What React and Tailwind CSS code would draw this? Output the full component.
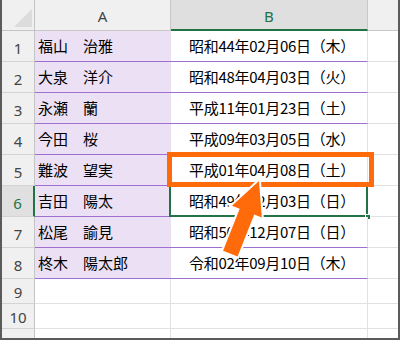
import React from "react";

const rows = [
  ["福山　治雅", "昭和44年02月06日（木）"],
  ["大泉　洋介", "昭和48年04月03日（火）"],
  ["永瀬　蘭", "平成11年01月23日（土）"],
  ["今田　桜", "平成09年03月05日（水）"],
  ["難波　望実", "平成01年04月08日（土）"],
  ["吉田　陽太", "昭和49年12月03日（日）"],
  ["松尾　諭見", "昭和50年12月07日（日）"],
  ["柊木　陽太郎", "令和02年09月10日（木）"],
];

const jp = { fontFamily: '"Noto Sans CJK JP", "Noto Sans", sans-serif' };
const ui = { fontFamily: '"Noto Sans", "Open Sans", sans-serif' };

export default function App() {
  return (
    <div className="relative w-[400px] h-[340px] overflow-hidden bg-white border-l-2 border-r-2 border-b-2 border-[#5b5b5b]">
      {/* header row */}
      <div className="flex h-[31px]" style={ui}>
        <div className="relative w-[33px] bg-[#f0f0f0] border-r border-b border-[#c4c4c4]">
          <svg className="absolute left-0 top-0" width="32" height="30">
            <polygon points="12,27 30,27 30,9" fill="#dcdcdc" />
          </svg>
        </div>
        <div className="w-[136px] bg-[#f0f0f0] border-r border-b border-[#c8c8c8] flex items-center justify-center pt-[3px] text-[15px] text-[#444]">
          A
        </div>
        <div className="w-[197px] bg-[#dfdfdf] border-r border-[#c8c8c8] border-b-2 border-b-[#217346] flex items-center justify-center pt-[3px] text-[15px] text-[#217346]">
          B
        </div>
        <div className="w-[30px] bg-[#f0f0f0] border-b border-[#c8c8c8]" />
      </div>

      {rows.map(([name, date], i) => {
        const active = i === 5;
        return (
          <div key={i} className="flex h-[31px]">
            <div
              className={
                active
                  ? "w-[33px] bg-[#e0e0e0] border-r-2 border-r-[#217346] border-b border-b-[#d4d4d4] flex items-center justify-center pt-[4px] text-[15px] text-[#217346]"
                  : "w-[33px] bg-[#f0f0f0] border-r border-r-[#c4c4c4] border-b border-b-[#d4d4d4] flex items-center justify-center pt-[4px] text-[15px] text-[#444]"
              }
              style={ui}
            >
              {i + 1}
            </div>
            <div
              className="w-[136px] bg-[#ece1f4] border-b border-[#9e6fd0] flex items-center pl-[3px] text-[15px] text-black whitespace-nowrap"
              style={jp}
            >
              {name}
            </div>
            <div
              className="relative w-[197px] bg-white border-r border-r-[#e1e1e1] border-b border-b-[#9e6fd0] flex items-center justify-center text-[15px] tracking-[-0.3px] text-black whitespace-nowrap pl-[6px]"
              style={jp}
            >
              {date}
              {active && (
                <>
                  <div className="absolute left-[-2px] top-[-2px] w-[199px] h-[33px] border-2 border-[#217346]" />
                  <div className="absolute right-[-4px] bottom-[-4px] w-[6px] h-[6px] bg-[#217346] border border-white" />
                </>
              )}
            </div>
            <div className="w-[30px] border-b border-[#e1e1e1]" />
          </div>
        );
      })}

      {[9, 10, 11].map((n) => (
        <div key={n} className="flex h-[25px]">
          <div
            className="w-[33px] bg-[#f0f0f0] border-r border-r-[#c4c4c4] border-b border-b-[#d4d4d4] flex items-center justify-center pt-[3px] text-[15px] text-[#444]"
            style={ui}
          >
            {n}
          </div>
          <div className="w-[136px] border-r border-b border-[#e1e1e1]" />
          <div className="w-[197px] border-r border-b border-[#e1e1e1]" />
          <div className="w-[30px] border-b border-[#e1e1e1]" />
        </div>
      ))}

      {/* annotation: orange box */}
      <div className="absolute left-[165px] top-[152px] w-[207px] h-[35px] border-[5px] border-[#ff6a0b] pointer-events-none" />

      {/* annotation: arrow */}
      <svg className="absolute left-[-2px] top-0 pointer-events-none" width="400" height="340">
        <polygon
          points="259,181 261.8,217.6 254.2,214.6 237.6,256.5 223.1,250.7 239.7,208.8 232,205.8"
          fill="#ff6a0b"
          stroke="#ffffff"
          strokeWidth="4"
          strokeLinejoin="miter"
          paintOrder="stroke"
        />
      </svg>
    </div>
  );
}
